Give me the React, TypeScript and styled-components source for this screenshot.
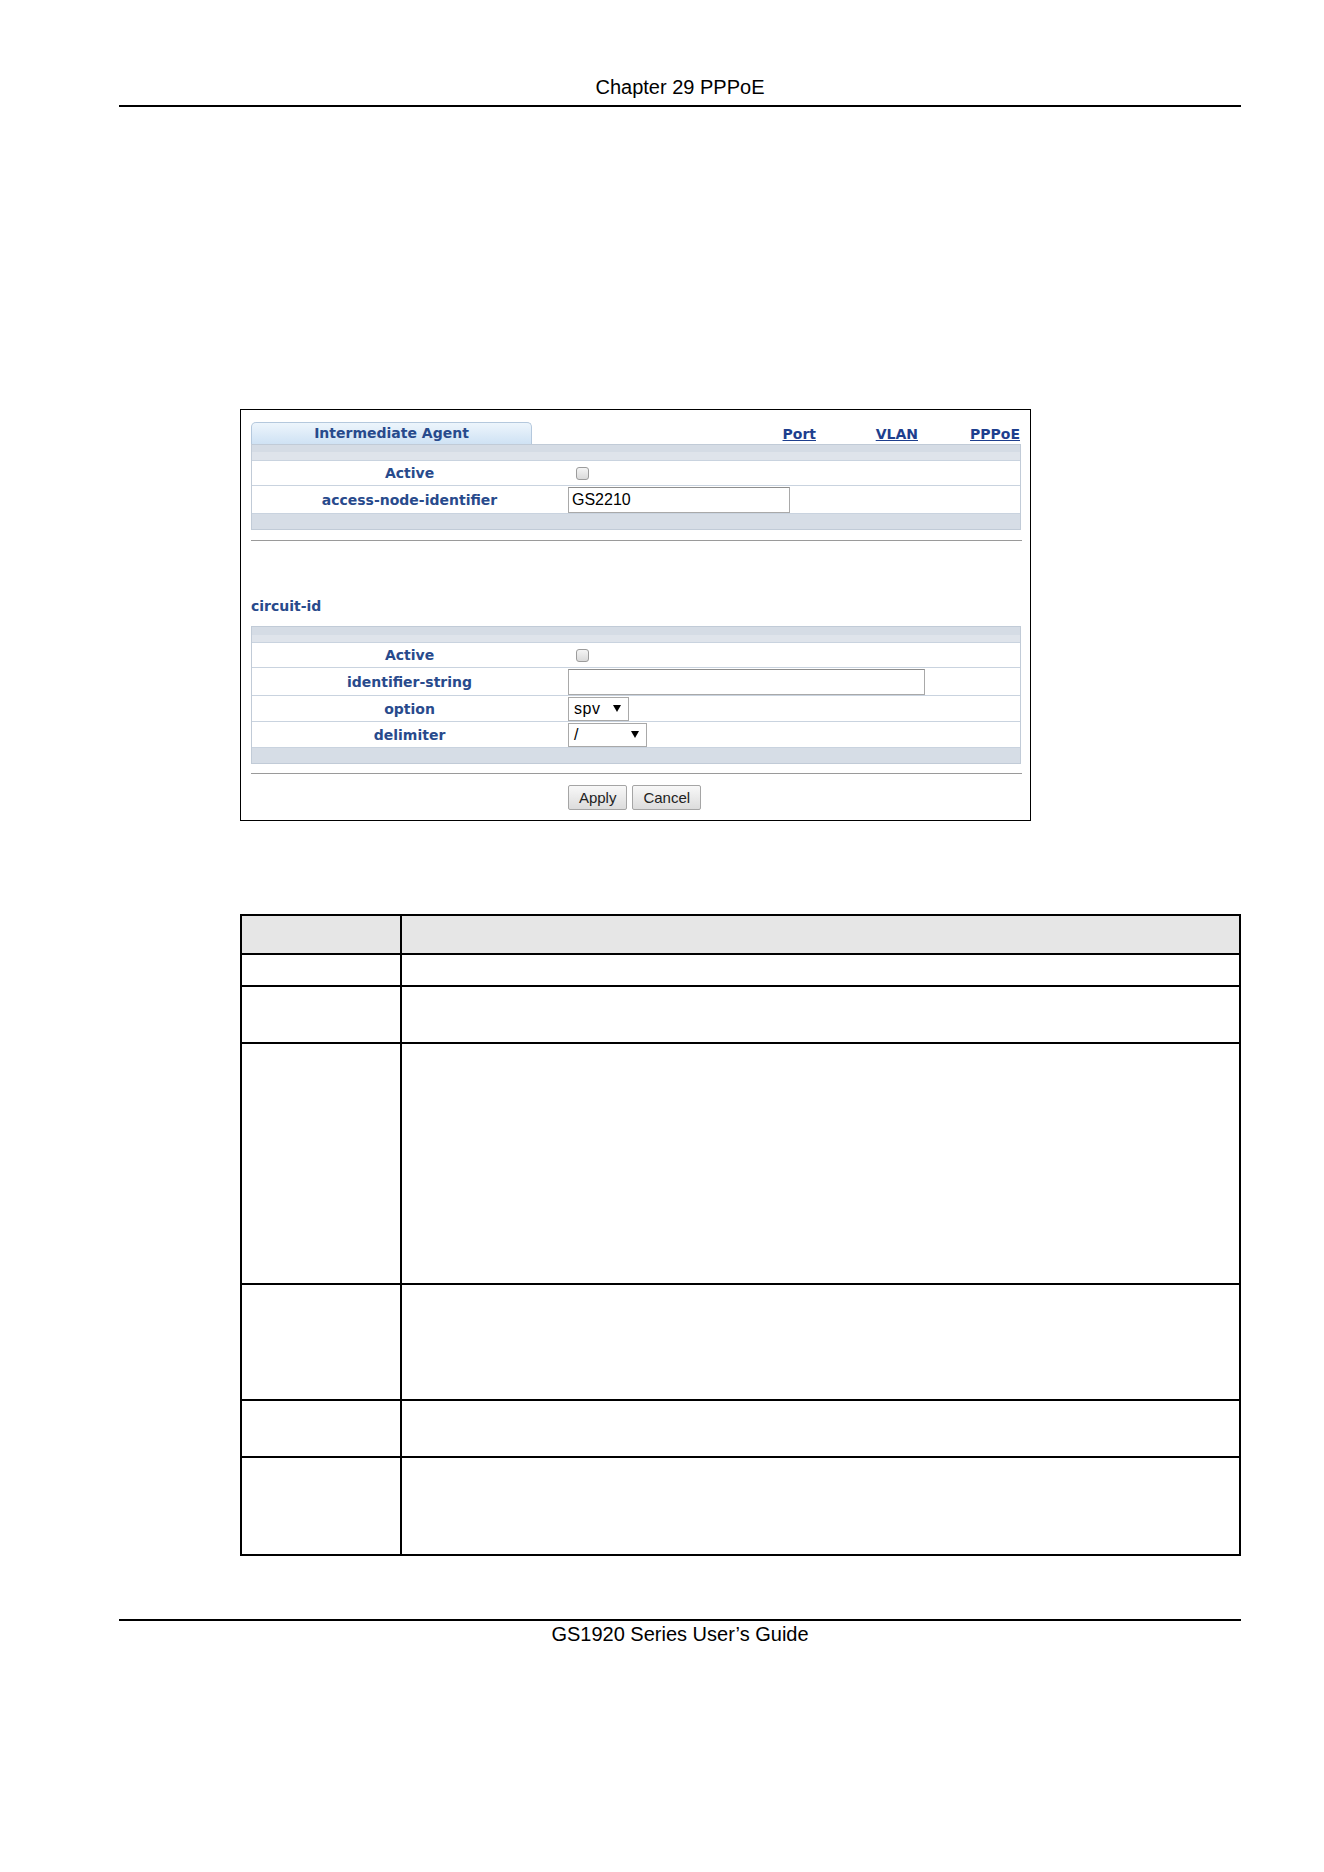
import React from 'react';
import styled, { createGlobalStyle } from 'styled-components';

const GlobalStyle = createGlobalStyle`
  *, *::before, *::after { box-sizing: border-box; }
  html, body { margin: 0; padding: 0; background: #fff; }
  body {
    width: 1324px;
    min-height: 1872px;
    font-family: "Liberation Sans", Arial, sans-serif;
    color: #000;
  }
`;

const Page = styled.div`
  width: 1122px;
  margin-left: 119px;
`;

const RunningHead = styled.header`
  padding-top: 76px;
  padding-bottom: 6px;
  border-bottom: 2px solid #000;
  text-align: center;
  font-size: 20px;
  line-height: 23px;
`;

const Body = styled.main`
  padding-left: 121px;
  padding-top: 302px;
`;

/* ---- device web GUI capture ---- */

const Shot = styled.div`
  width: 791px;
  border: 1px solid #000;
  padding: 12px 8px 10px 10px;
  font-family: "DejaVu Sans", Verdana, sans-serif;
`;

const TabRow = styled.div`
  display: flex;
  align-items: flex-end;
  height: 22px;
`;

const Tab = styled.div`
  width: 281px;
  height: 22px;
  border: 1px solid #b4c8dd;
  border-bottom: none;
  border-radius: 5px 5px 0 0;
  background: linear-gradient(#edf5fc, #cfe2f4);
  color: #284a8c;
  font-size: 14px;
  font-weight: bold;
  line-height: 20px;
  text-align: center;
`;

const Links = styled.nav`
  display: flex;
  margin-left: auto;
  margin-right: 2px;
  line-height: 20px;
`;

const NavLink = styled.a`
  width: 102px;
  text-align: right;
  font-size: 14px;
  font-weight: bold;
  color: #1e3f8e;
  text-decoration: underline;
  cursor: pointer;
`;

const Grid = styled.div`
  width: 770px;
  border: 1px solid #c1cbd7;
`;

const Bar = styled.div<{ $bottom?: boolean }>`
  height: ${p => (p.$bottom ? 16 : 15)}px;
  border-top: ${p => (p.$bottom ? '1px solid #c9d3df' : 'none')};
  background: ${p =>
    p.$bottom ? '#d6dde6' : 'linear-gradient(#d5dce5 0 50%, #dfe4eb 50% 100%)'};
`;

const FieldRow = styled.div<{ $h: number }>`
  display: flex;
  height: ${p => p.$h}px;
  border-top: 1px solid #c9d3df;
  background: #fff;
`;

const Label = styled.div`
  width: 315px;
  display: flex;
  align-items: center;
  justify-content: center;
  font-size: 14px;
  font-weight: bold;
  color: #284a8c;
`;

const Value = styled.div`
  flex: 1;
  display: flex;
  align-items: center;
  padding-left: 1px;
`;

const Check = styled.span`
  display: block;
  width: 13px;
  height: 13px;
  margin-left: 8px;
  border: 1px solid #9c9c9c;
  border-radius: 3px;
  background: linear-gradient(#f4f4f4, #dadada);
`;

const TextBox = styled.div<{ $w: number }>`
  width: ${p => p.$w}px;
  height: 26px;
  border: 1px solid #a9a9a9;
  border-top-color: #8e8e8e;
  background: #fff;
  padding-left: 3px;
  font-family: "Liberation Sans", Arial, sans-serif;
  font-size: 16px;
  line-height: 24px;
  color: #000;
`;

const Dropdown = styled.div<{ $w: number }>`
  display: flex;
  align-items: center;
  width: ${p => p.$w}px;
  height: 24px;
  border: 1px solid #a9a9a9;
  background: #fff;
  padding: 0 7px 0 5px;
  font-family: "Liberation Sans", Arial, sans-serif;
  font-size: 16px;
  color: #000;
`;

const DropText = styled.span`
  flex: 1;
  letter-spacing: 0.5px;
`;

const Rule = styled.div<{ $top: number }>`
  margin-top: ${p => p.$top}px;
  border-top: 1px solid #9a9a9a;
`;

const SectionTitle = styled.div`
  margin-top: 57px;
  margin-bottom: 11px;
  font-size: 14px;
  font-weight: bold;
  line-height: 17px;
  color: #284a8c;
`;

const Actions = styled.div`
  display: flex;
  justify-content: center;
  gap: 5px;
  margin-top: 11px;
  padding-right: 4px;
`;

const Btn = styled.button`
  height: 25px;
  padding: 0 10px;
  border: 1px solid #a5a5a5;
  border-radius: 2px;
  background: linear-gradient(#f8f8f8, #dcdcdc);
  font-family: "Liberation Sans", Arial, sans-serif;
  font-size: 15px;
  color: #222;
`;

/* ---- field description table ---- */

const DescTable = styled.table`
  margin-top: 93px;
  width: 1001px;
  border-collapse: collapse;
  table-layout: fixed;
`;

const Cell = styled.td<{ $head?: boolean }>`
  border: 2px solid #000;
  padding: 0;
  background: ${p => (p.$head ? '#e6e6e6' : '#fff')};
`;

const DescRow = styled.tr<{ $h: number }>`
  height: ${p => p.$h}px;
`;

const RunningFoot = styled.footer`
  margin-top: 63px;
  border-top: 2px solid #000;
  padding-top: 2px;
  text-align: center;
  font-size: 20px;
  line-height: 23px;
`;

const Arrow = () => (
  <svg width="8" height="7" viewBox="0 0 8 7">
    <polygon points="0,0 8,0 4,7" fill="#000" />
  </svg>
);

const descRows = [32, 57, 241, 116, 57, 98];

export default function App() {
  return (
    <>
      <GlobalStyle />
      <Page>
        <RunningHead>Chapter 29 PPPoE</RunningHead>
        <Body>
          <Shot>
            <TabRow>
              <Tab>Intermediate Agent</Tab>
              <Links>
                <NavLink>Port</NavLink>
                <NavLink>VLAN</NavLink>
                <NavLink>PPPoE</NavLink>
              </Links>
            </TabRow>
            <Grid>
              <Bar />
              <FieldRow $h={25}>
                <Label>Active</Label>
                <Value><Check /></Value>
              </FieldRow>
              <FieldRow $h={28}>
                <Label>access-node-identifier</Label>
                <Value><TextBox $w={222}>GS2210</TextBox></Value>
              </FieldRow>
              <Bar $bottom />
            </Grid>
            <Rule $top={10} />

            <SectionTitle>circuit-id</SectionTitle>
            <Grid>
              <Bar />
              <FieldRow $h={25}>
                <Label>Active</Label>
                <Value><Check /></Value>
              </FieldRow>
              <FieldRow $h={28}>
                <Label>identifier-string</Label>
                <Value><TextBox $w={357} /></Value>
              </FieldRow>
              <FieldRow $h={26}>
                <Label>option</Label>
                <Value>
                  <Dropdown $w={61}><DropText>spv</DropText><Arrow /></Dropdown>
                </Value>
              </FieldRow>
              <FieldRow $h={26}>
                <Label>delimiter</Label>
                <Value>
                  <Dropdown $w={79}><DropText>/</DropText><Arrow /></Dropdown>
                </Value>
              </FieldRow>
              <Bar $bottom />
            </Grid>
            <Rule $top={9} />
            <Actions>
              <Btn>Apply</Btn>
              <Btn>Cancel</Btn>
            </Actions>
          </Shot>

          <DescTable>
            <colgroup>
              <col style={{ width: 160 }} />
              <col />
            </colgroup>
            <tbody>
              <DescRow $h={39}>
                <Cell $head />
                <Cell $head />
              </DescRow>
              {descRows.map((h, i) => (
                <DescRow key={i} $h={h}>
                  <Cell />
                  <Cell />
                </DescRow>
              ))}
            </tbody>
          </DescTable>
        </Body>
        <RunningFoot>GS1920 Series User’s Guide</RunningFoot>
      </Page>
    </>
  );
}
